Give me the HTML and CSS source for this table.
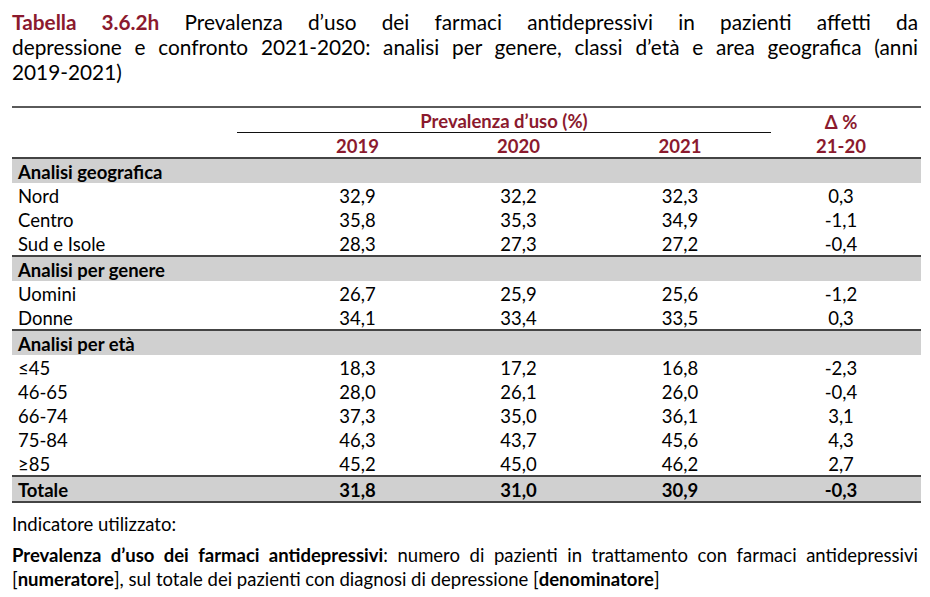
FILE: index.html
```html
<!DOCTYPE html>
<html lang="it">
<head>
<meta charset="utf-8">
<title>Tabella 3.6.2h</title>
<link rel="stylesheet" href="styles.css">
</head>
<body>
<div class="page">
  <h1 class="title">
    <span class="jl"><span class="tag">Tabella 3.6.2h</span> Prevalenza d’uso dei farmaci antidepressivi in pazienti affetti da</span>
    <span class="jl">depressione e confronto 2021-2020: analisi per genere, classi d’età e area geografica (anni</span>
    <span class="last">2019-2021)</span>
  </h1>

  <table class="data">
    <colgroup>
      <col class="c-label"><col class="c-num"><col class="c-num"><col class="c-num3"><col class="c-delta">
    </colgroup>
    <thead>
      <tr class="h1row">
        <th></th>
        <th colspan="3"><div class="span-head">Prevalenza d’uso (%)</div></th>
        <th>Δ %</th>
      </tr>
      <tr class="h2row">
        <th></th>
        <th>2019</th>
        <th>2020</th>
        <th>2021</th>
        <th>21-20</th>
      </tr>
    </thead>
    <tbody>
      <tr class="section"><td colspan="5">Analisi geografica</td></tr>
      <tr><td>Nord</td><td>32,9</td><td>32,2</td><td>32,3</td><td>0,3</td></tr>
      <tr><td>Centro</td><td>35,8</td><td>35,3</td><td>34,9</td><td>-1,1</td></tr>
      <tr><td>Sud e Isole</td><td>28,3</td><td>27,3</td><td>27,2</td><td>-0,4</td></tr>
      <tr class="section"><td colspan="5">Analisi per genere</td></tr>
      <tr><td>Uomini</td><td>26,7</td><td>25,9</td><td>25,6</td><td>-1,2</td></tr>
      <tr><td>Donne</td><td>34,1</td><td>33,4</td><td>33,5</td><td>0,3</td></tr>
      <tr class="section"><td colspan="5">Analisi per età</td></tr>
      <tr><td>≤45</td><td>18,3</td><td>17,2</td><td>16,8</td><td>-2,3</td></tr>
      <tr><td>46-65</td><td>28,0</td><td>26,1</td><td>26,0</td><td>-0,4</td></tr>
      <tr><td>66-74</td><td>37,3</td><td>35,0</td><td>36,1</td><td>3,1</td></tr>
      <tr><td>75-84</td><td>46,3</td><td>43,7</td><td>45,6</td><td>4,3</td></tr>
      <tr><td>≥85</td><td>45,2</td><td>45,0</td><td>46,2</td><td>2,7</td></tr>
      <tr class="total"><td>Totale</td><td>31,8</td><td>31,0</td><td>30,9</td><td>-0,3</td></tr>
    </tbody>
  </table>

  <p class="note">Indicatore utilizzato:</p>
  <p class="def">
    <span class="jl"><b>Prevalenza d’uso dei farmaci antidepressivi</b>: numero di pazienti in trattamento con farmaci antidepressivi</span>
    <span class="last">[<b>numeratore</b>], sul totale dei pazienti con diagnosi di depressione [<b>denominatore</b>]</span>
  </p>
</div>
</body>
</html>
```

FILE: styles.css
```css
* { box-sizing: border-box; }

html, body {
  margin: 0;
  padding: 0;
  background: #ffffff;
}

body {
  font-family: Lato, "Open Sans", "Liberation Sans", sans-serif;
  color: #000;
}

.page {
  padding: 9px 9px 0 12px;
  width: 930px;
}

.title {
  margin: 0 3px 0 0;
  font-size: 20.8px;
  font-weight: 400;
  line-height: 25px;
}

.jl {
  display: block;
  text-align: justify;
  text-align-last: justify;
}

.last {
  display: block;
  text-align: left;
}

.tag {
  color: #8b1a2e;
  font-weight: 700;
}

.data {
  margin-top: 22px;
  width: 909px;
  border-collapse: collapse;
  table-layout: fixed;
  border-top: 2px solid #5a5a5a;
  border-bottom: 2px solid #444;
  font-size: 18.5px;
}

.c-label { width: 265px; }
.c-num { width: 161px; }
.c-num3 { width: 162px; }
.c-delta { width: 160px; }

.data th,
.data td {
  padding: 0;
  height: 24px;
  line-height: 24px;
  text-align: center;
  white-space: nowrap;
}

.data th {
  color: #8b1a2e;
  font-weight: 700;
  padding-top: 2px;
  line-height: 22px;
}

.span-head {
  margin: 0 -10px 0 -40px;
  border-bottom: 1px solid #111;
  line-height: 22px;
}

thead {
  border-bottom: 2px solid #444;
}

.data td:first-child {
  text-align: left;
  padding-left: 6px;
}

.data tbody td {
  padding-top: 3px;
  line-height: 21px;
}

.section td {
  background: #d0d0d0;
  font-weight: 700;
  padding-top: 0;
  line-height: 24px;
}

tbody .section:not(:first-child) {
  border-top: 2px solid #444;
}

.total {
  border-top: 2px solid #444;
}

.total td {
  background: #d0d0d0;
  font-weight: 700;
}

.note {
  margin: 9px 0 0 0;
  font-size: 18.5px;
  line-height: 24px;
}

.def {
  margin: 7px 3px 0 0;
  font-size: 18.5px;
  line-height: 24px;
}
```
